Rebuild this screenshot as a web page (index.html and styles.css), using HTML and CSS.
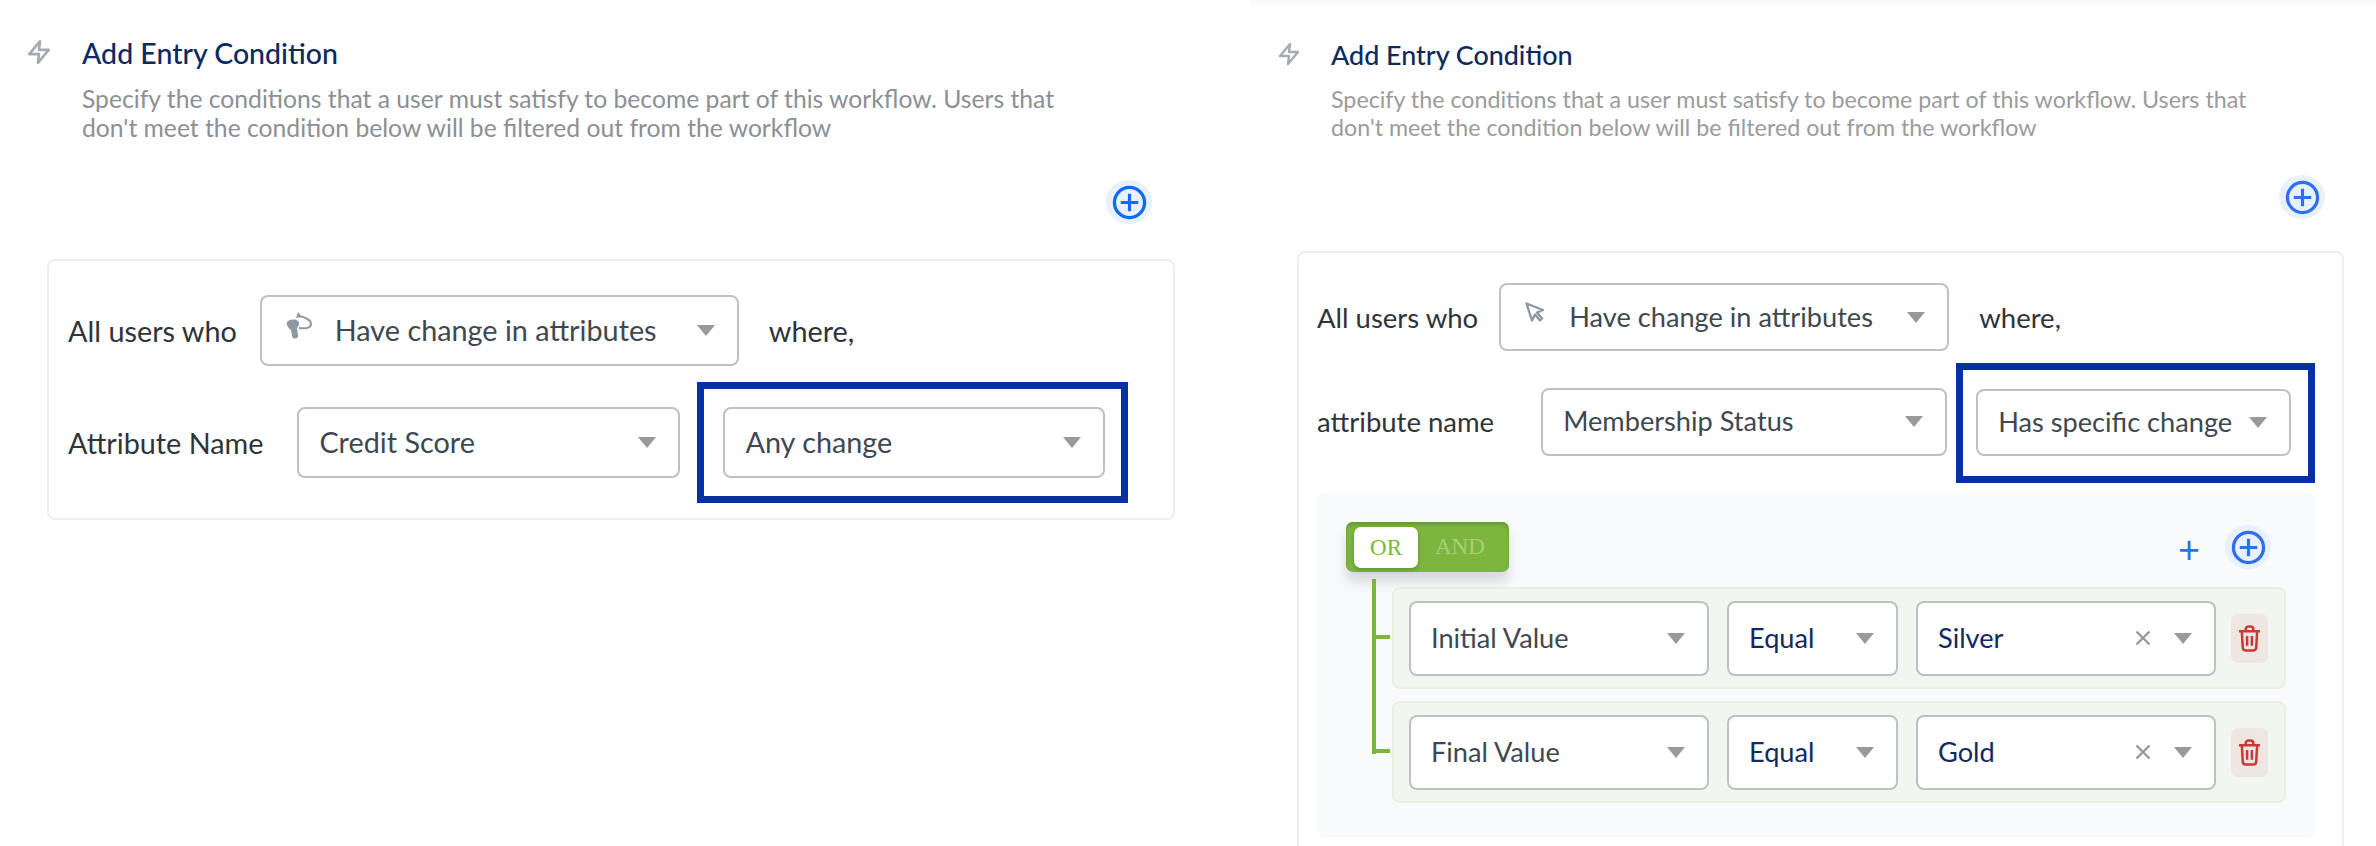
FILE: index.html
```html
<!DOCTYPE html>
<html>
<head>
    <title>Add Entry Condition</title>
    <link rel="stylesheet" href="styles.css">
</head>
<body>
    <svg class="defs" width="0" height="0">
        <symbol id="bolt" viewBox="0 0 24 24">
            <path d="M13 2 3 14h9l-1 8 10-12h-9l1-8z" fill="none" stroke="currentColor" stroke-width="2.4" stroke-linejoin="round"/>
        </symbol>
        <symbol id="plus-circle" viewBox="0 0 36 36">
            <circle cx="18" cy="18" r="15.5" fill="none" stroke="currentColor" stroke-width="3.4"/>
            <path d="M18 9v18M9 18h18" fill="none" stroke="currentColor" stroke-width="3.2"/>
        </symbol>
        <symbol id="trash" viewBox="0 0 24 27">
            <path d="M1 6h22M8 6V4a3 3 0 0 1 3-3h2a3 3 0 0 1 3 3v2M4 6l1 17a3 3 0 0 0 3 3h8a3 3 0 0 0 3-3l1-17M9.500 11v10M14.500 11v10" fill="none" stroke="currentColor" stroke-width="2.600"/>
        </symbol>
    </svg>

    <div class="page">
        <!-- left example -->
        <section class="panel panel-left">
            <div class="head">
                <svg class="bolt"><use href="#bolt"/></svg>
                <div>
                    <h2 class="title">Add Entry Condition</h2>
                    <p class="desc">Specify the conditions that a user must satisfy to become part of this workflow. Users that<br>don't meet the condition below will be filtered out from the workflow</p>
                </div>
            </div>
            <div class="add-row">
                <span class="halo"><svg class="plus-icon"><use href="#plus-circle"/></svg></span>
            </div>
            <div class="card">
                <div class="line line-users">
                    <span class="label">All users who</span>
                    <div class="select select-users">
                        <svg class="kind-icon" width="27" height="28" viewBox="0 0 27 28">
                            <path d="M1 10c3-3 8-3 11-1 2 2 1 5-1 7l1 7a3 3 0 0 1-6 1l-1-6C3 17 0 13 1 10z" fill="#8e9aa3"/>
                            <path d="M13 4c6 1 12 4 12 8 0 4-5 5-12 4" fill="none" stroke="#8e9aa3" stroke-width="2"/>
                            <path d="M12 0l4 5-6 1z" fill="#8e9aa3"/>
                        </svg>
                        <span class="value">Have change in attributes</span>
                        <i class="caret"></i>
                    </div>
                    <span class="label where">where,</span>
                </div>
                <div class="line line-attr">
                    <span class="label">Attribute Name</span>
                    <div class="select select-attr">
                        <span class="value">Credit Score</span>
                        <i class="caret"></i>
                    </div>
                    <div class="select select-change">
                        <span class="value">Any change</span>
                        <i class="caret"></i>
                        <span class="highlight"></span>
                    </div>
                </div>
            </div>
        </section>

        <!-- right example -->
        <section class="panel panel-right">
            <div class="head">
                <svg class="bolt"><use href="#bolt"/></svg>
                <div>
                    <h2 class="title">Add Entry Condition</h2>
                    <p class="desc">Specify the conditions that a user must satisfy to become part of this workflow. Users that<br>don't meet the condition below will be filtered out from the workflow</p>
                </div>
            </div>
            <div class="add-row">
                <span class="halo"><svg class="plus-icon"><use href="#plus-circle"/></svg></span>
            </div>
            <div class="card">
                <div class="line line-users">
                    <span class="label">All users who</span>
                    <div class="select select-users">
                        <svg class="kind-icon" width="20" height="20" viewBox="0 0 20 20">
                            <path d="M1.500 1.500 18 8l-6 2.500 5 6-2 2-5-6-3 6z" fill="none" stroke="#8e9aa3" stroke-width="2.400" stroke-linejoin="round"/>
                        </svg>
                        <span class="value">Have change in attributes</span>
                        <i class="caret"></i>
                    </div>
                    <span class="label where">where,</span>
                </div>
                <div class="line line-attr">
                    <span class="label">attribute name</span>
                    <div class="select select-attr">
                        <span class="value">Membership Status</span>
                        <i class="caret"></i>
                    </div>
                    <div class="select select-change">
                        <span class="value">Has specific change</span>
                        <i class="caret"></i>
                        <span class="highlight"></span>
                    </div>
                </div>

                <div class="filter">
                    <div class="filter-head">
                        <div class="toggle">
                            <span class="knob">OR</span>
                            <span class="toggle-off">AND</span>
                        </div>
                        <div class="filter-actions">
                            <span class="plain-plus">+</span>
                            <span class="halo"><svg class="plus-icon"><use href="#plus-circle"/></svg></span>
                        </div>
                    </div>
                    <div class="rows">
                        <div class="row">
                            <div class="select select-field"><span class="value">Initial Value</span><i class="caret"></i></div>
                            <div class="select select-op"><span class="value navy">Equal</span><i class="caret"></i></div>
                            <div class="select select-field">
                                <span class="value navy">Silver</span>
                                <svg class="clear" viewBox="0 0 16 16"><path d="M1.500 1.500l13 13M14.500 1.500l-13 13" stroke="#999" stroke-width="2.400"/></svg>
                                <i class="caret"></i>
                            </div>
                            <span class="delete"><svg class="trash"><use href="#trash"/></svg></span>
                        </div>
                        <div class="row">
                            <div class="select select-field"><span class="value">Final Value</span><i class="caret"></i></div>
                            <div class="select select-op"><span class="value navy">Equal</span><i class="caret"></i></div>
                            <div class="select select-field">
                                <span class="value navy">Gold</span>
                                <svg class="clear" viewBox="0 0 16 16"><path d="M1.500 1.500l13 13M14.500 1.500l-13 13" stroke="#999" stroke-width="2.400"/></svg>
                                <i class="caret"></i>
                            </div>
                            <span class="delete"><svg class="trash"><use href="#trash"/></svg></span>
                        </div>
                    </div>
                </div>
            </div>
        </section>
    </div>
</body>
</html>
```

FILE: styles.css
```css
html, body {
    margin: 0;
    height: 100%;
    overflow: hidden;
    background: #fff;
}
body {
    font-family: "Lato", "Noto Sans", sans-serif;
}
.defs {
    position: absolute;
}
.page {
    display: flex;
    width: 2376px;
    height: 846px;
    overflow: hidden;
}

/* panels */
.panel {
    box-sizing: border-box;
    height: 846px;
}
.panel-left {
    width: 1250px;
    padding: 36px 0 0 27px;
}
.panel-right {
    width: 1126px;
    padding: 38px 0 0 28px;
    background: linear-gradient(#f7f7f7, #fff 6px);
}

/* heading */
.head {
    display: flex;
}
.bolt {
    flex: none;
    color: #a6abb1;
}
.panel-left .bolt {
    width: 26px;
    height: 28px;
    margin: 2px 30px 0 -1px;
}
.panel-right .bolt {
    width: 24px;
    height: 26px;
    margin: 3px 30px 0 -1px;
}
.title {
    margin: 0;
    font-weight: 500;
    color: #0b2a5e;
    line-height: 34px;
}
.panel-left .title {
    font-size: 28.500px;
}
.panel-right .title {
    font-size: 26.900px;
}
.desc {
    margin: 0;
    color: #8c8f94;
}
.panel-left .desc {
    margin-top: 14px;
    font-size: 24.700px;
    line-height: 29px;
}
.panel-right .desc {
    margin-top: 13px;
    font-size: 23.250px;
    line-height: 28px;
    color: #9b9b9b;
}

/* round plus */
.add-row {
    display: flex;
    justify-content: flex-end;
}
.panel-left .add-row {
    width: 1125px;
    margin: 38px 0 35px;
}
.panel-right .add-row {
    width: 1047px;
    margin: 34px 0 32px;
}
.halo {
    display: flex;
    align-items: center;
    justify-content: center;
    width: 46px;
    height: 44px;
    border-radius: 50%;
    background: #e8f0fc;
}
.plus-icon {
    width: 35px;
    height: 35px;
    color: #0a6cf5;
}
.panel-right .plus-icon {
    color: #2f6fed;
}

/* card */
.card {
    box-sizing: border-box;
    border: 2px solid #eeeeee;
    border-radius: 8px;
}
.panel-left .card {
    width: 1128px;
    height: 261px;
    margin-left: 20px;
    padding: 34px 19px 0;
}
.panel-right .card {
    width: 1047px;
    height: 640px;
    margin-left: 19px;
    padding: 30px 26px 0 18px;
}
.line {
    display: flex;
    align-items: center;
}
.label {
    flex: none;
    font-size: 28.800px;
    color: #2f3438;
}
.panel-right .label {
    font-size: 27.500px;
}
.panel-left .line-users .select {
    margin-left: 23px;
}
.panel-right .line-users .select {
    margin-left: 21px;
}
.where {
    margin-left: 30px;
}
.panel-left .line-attr {
    margin-top: 41px;
}
.panel-right .line-attr {
    margin-top: 36px;
}

/* selects */
.select {
    box-sizing: border-box;
    flex: none;
    position: relative;
    display: flex;
    align-items: center;
    padding: 0 20px;
    border: 2px solid #bfc0c3;
    border-radius: 8px;
    background: #fff;
}
.value {
    flex: 1;
    padding-bottom: 2px;
    font-size: 28.800px;
    color: #3f4850;
    white-space: nowrap;
}
.panel-right .value {
    font-size: 27.200px;
}
.value.navy {
    color: #14295e;
}
.caret {
    flex: none;
    width: 0;
    height: 0;
    margin-right: 2px;
    border-left: 9.500px solid transparent;
    border-right: 9.500px solid transparent;
    border-top: 11px solid #999;
}
.kind-icon {
    flex: none;
    align-self: flex-start;
}
.panel-left .select-users {
    width: 479px;
    height: 71px;
}
.panel-left .kind-icon {
    margin: 15px 22px 0 4px;
}
.panel-left .select-attr {
    width: 383px;
    height: 71px;
    margin-left: 34px;
}
.panel-left .select-change {
    width: 382px;
    height: 71px;
    margin-left: 43px;
}
.panel-right .select-users {
    width: 450px;
    height: 68px;
}
.panel-right .kind-icon {
    margin: 17px 24px 0 4px;
}
.panel-right .select-attr {
    width: 406px;
    height: 68px;
    margin-left: 47px;
}
.panel-right .select-change {
    width: 315px;
    height: 67px;
    margin: 2px 0 0 29px;
}

/* annotation drawn on top of the screenshot */
.highlight {
    position: absolute;
    box-sizing: border-box;
    border: 7.500px solid #0332a0;
}
.panel-left .highlight {
    inset: -27px -25px -27px -28px;
}
.panel-right .highlight {
    inset: -28px -26px -29px -22px;
}

/* filter block */
.filter {
    box-sizing: border-box;
    height: 344px;
    margin-top: 37px;
    padding: 29px 30px 0 29px;
    border-radius: 8px;
    background: #f9fafc;
}
.filter-head {
    display: flex;
    align-items: center;
    justify-content: space-between;
}
.toggle {
    display: flex;
    align-items: center;
    box-sizing: border-box;
    width: 163px;
    height: 50px;
    padding: 0 8px;
    border-radius: 7px;
    background: #7cb63e;
    box-shadow: inset 0 3px 3px #68993a, 0 10px 12px rgba(60, 70, 80, 0.18);
    font-family: "Liberation Serif", serif;
    font-size: 23px;
}
.knob {
    width: 64px;
    height: 41px;
    line-height: 41px;
    text-align: center;
    border-radius: 7px;
    background: #fff;
    color: #7ab83c;
    box-shadow: 0 2px 4px rgba(40, 60, 20, 0.3);
}
.toggle-off {
    margin-left: 17px;
    color: #a6cf78;
}
.filter-actions {
    display: flex;
    align-items: center;
    gap: 25px;
    margin-right: 15px;
}
.plain-plus {
    padding-top: 2px;
    font-size: 38px;
    line-height: 38px;
    color: #2f6fed;
}
.rows {
    position: relative;
    display: flex;
    flex-direction: column;
    gap: 12px;
    margin: 15px 0 0 46px;
}
.rows::before {
    content: "";
    position: absolute;
    left: -20px;
    top: -8px;
    bottom: 49px;
    width: 4px;
    background: #7cb63e;
}
.row {
    position: relative;
    box-sizing: border-box;
    display: flex;
    align-items: center;
    gap: 18px;
    height: 102px;
    padding: 0 15px;
    border: 2px solid #e8f0e2;
    border-radius: 8px;
    background: #f1f6f0;
}
.row::before {
    content: "";
    position: absolute;
    left: -22px;
    top: 46px;
    width: 18px;
    height: 4px;
    background: #7cb63e;
}
.select-field {
    width: 300px;
    height: 75px;
}
.select-op {
    width: 171px;
    height: 75px;
}
.clear {
    flex: none;
    width: 16px;
    height: 16px;
    margin-right: 23px;
}
.delete {
    display: flex;
    align-items: center;
    justify-content: center;
    width: 37px;
    height: 49px;
    margin-left: -3px;
    border-radius: 7px;
    background: #eee6e1;
}
.trash {
    width: 23px;
    height: 27px;
    color: #c8393a;
}
```
